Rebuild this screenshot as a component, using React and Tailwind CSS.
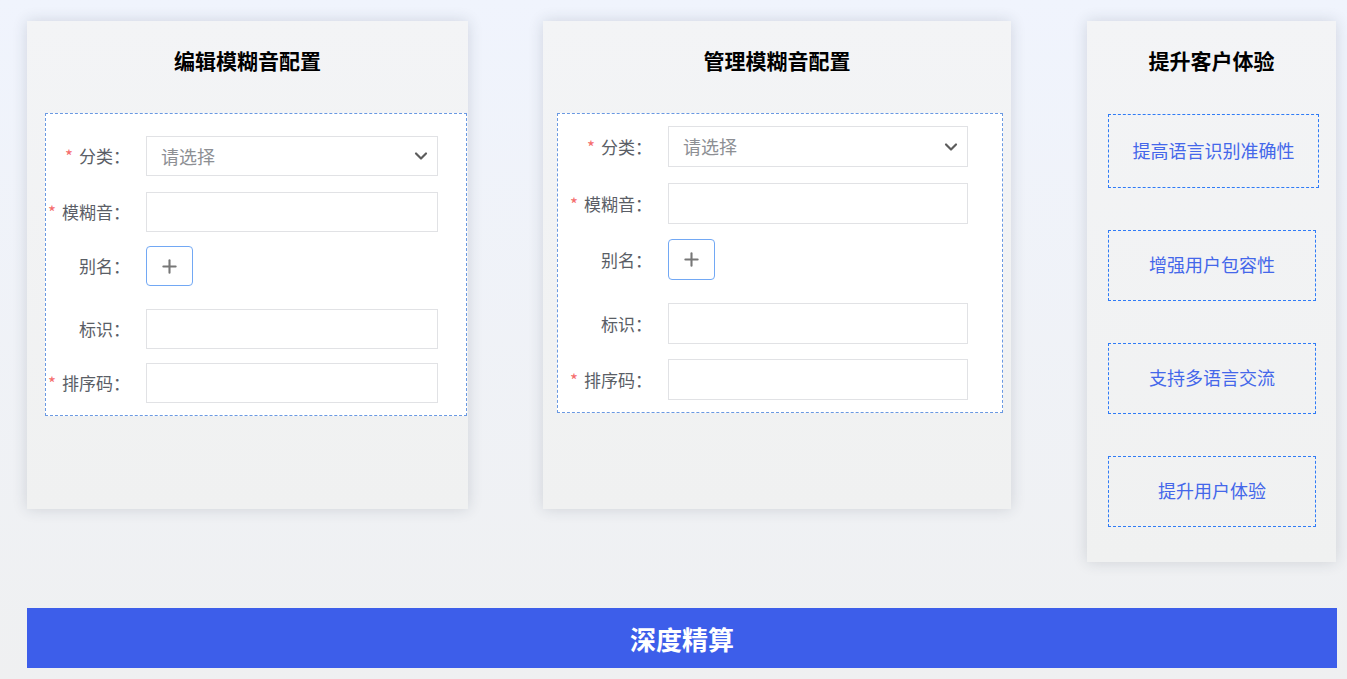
import { ChevronDown, Plus } from 'lucide-react'

const font = { fontFamily: '"Noto Sans CJK SC", "Noto Sans", sans-serif' }

// 左侧两张表单卡片的行配置
const editRows = [
  { label: '分类', required: true, type: 'select', gap: 'mt-0' },
  { label: '模糊音', required: true, type: 'input', gap: 'mt-[16px]' },
  { label: '别名', required: false, type: 'plus', gap: 'mt-[14px]' },
  { label: '标识', required: false, type: 'input', gap: 'mt-[23px]' },
  { label: '排序码', required: true, type: 'input', gap: 'mt-[14px]' }
]

const manageRows = [
  { label: '分类', required: true, type: 'select', gap: 'mt-0' },
  { label: '模糊音', required: true, type: 'input', gap: 'mt-[16px]' },
  { label: '别名', required: false, type: 'plus', gap: 'mt-[15px]' },
  { label: '标识', required: false, type: 'input', gap: 'mt-[23px]' },
  { label: '排序码', required: true, type: 'input', gap: 'mt-[15px]' }
]

const benefits = [
  { text: '提高语言识别准确性', size: 'w-[211px] h-[74px]' },
  { text: '增强用户包容性', size: 'w-[208px] h-[71px]' },
  { text: '支持多语言交流', size: 'w-[208px] h-[71px]' },
  { text: '提升用户体验', size: 'w-[208px] h-[71px]' }
]

const FormRow = ({ row, labelW, fieldW, h }) => {
  return (
    <div className={`flex items-center ${row.gap}`}>
      <label
        className={`${labelW} shrink-0 pr-[16px] text-right text-[17px] text-[#5a5e66] whitespace-nowrap`}
      >
        {row.required && <span className="text-[#f56c6c] text-[17px] mr-[6px]">*</span>}
        {row.label}：
      </label>

      {row.type === 'select' && (
        <div
          className={`${fieldW} ${h} flex items-center justify-between border border-[#e1e2e5] bg-white pl-[14px] pr-[6px]`}
        >
          <span className="text-[18px] text-[#8d8f94]">请选择</span>
          <ChevronDown size={20} strokeWidth={2.6} className="text-[#5c5c5c]" />
        </div>
      )}

      {row.type === 'input' && <div className={`${fieldW} ${h} border border-[#e1e2e5] bg-white`} />}

      {row.type === 'plus' && (
        <div
          className={`${h} w-[47px] flex items-center justify-center rounded-[4px] border border-[#72a8f4] bg-white`}
        >
          <Plus size={21} strokeWidth={2.4} className="text-[#777777]" />
        </div>
      )}
    </div>
  )
}

const Card = ({ className, title, children }) => {
  return (
    <div
      className={`${className} shrink-0 bg-gradient-to-b from-[#f3f4f6] to-[#f0f1f1] shadow-[0_0_14px_rgba(40,50,70,0.16)]`}
    >
      <h2 className="pt-[25px] h-[92px] text-center text-[21px] leading-[28px] font-bold text-black">
        {title}
      </h2>
      {children}
    </div>
  )
}

const App = () => {
  return (
    <div
      className="min-h-screen w-full bg-gradient-to-b from-[#f0f4fd] to-[#eff0f1] pl-[27px] pt-[21px] pb-[12px]"
      style={font}
    >
      <div className="flex items-start">
        {/* 编辑模糊音配置 */}
        <Card className="w-[441px] h-[488px]" title="编辑模糊音配置">
          <div className="ml-[18px] w-[422px] h-[303px] border border-dashed border-[#6a99e2] bg-white pt-[22px]">
            {editRows.map((row) => (
              <FormRow key={row.label} row={row} labelW="w-[100px]" fieldW="w-[292px]" h="h-[40px]" />
            ))}
          </div>
        </Card>

        {/* 管理模糊音配置 */}
        <Card className="ml-[75px] w-[468px] h-[488px]" title="管理模糊音配置">
          <div className="ml-[14px] w-[446px] h-[300px] border border-dashed border-[#6a99e2] bg-white pt-[12px]">
            {manageRows.map((row) => (
              <FormRow key={row.label} row={row} labelW="w-[110px]" fieldW="w-[300px]" h="h-[41px]" />
            ))}
          </div>
        </Card>

        {/* 提升客户体验 */}
        <Card className="ml-[76px] w-[249px] h-[541px]" title="提升客户体验">
          <div className="ml-[21px] flex flex-col items-start gap-[42px] pt-px">
            {benefits.map((b) => (
              <div
                key={b.text}
                className={`${b.size} flex items-center justify-center border border-dashed border-[#2f7bf6] pb-[2px] text-[18px] text-[#4467ea]`}
              >
                {b.text}
              </div>
            ))}
          </div>
        </Card>
      </div>

      <div className="mt-[46px] w-[1310px] h-[60px] flex items-center justify-center bg-[#3d5eea]">
        <span className="text-white text-[26px] font-bold">深度精算</span>
      </div>
    </div>
  )
}

export default App
